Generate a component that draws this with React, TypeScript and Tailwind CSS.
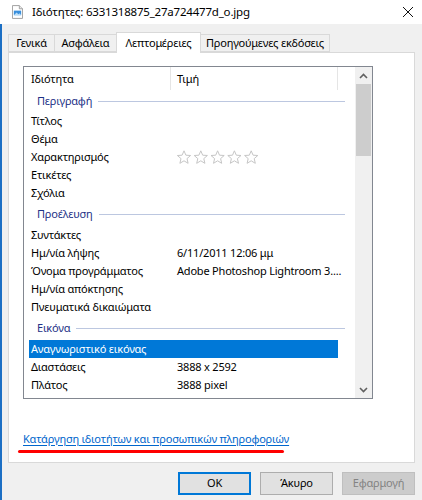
import React from 'react'

const font = { fontFamily: '"Noto Sans", "Liberation Sans", sans-serif' }

type Row =
  | { kind: 'group'; label: string; h: string }
  | { kind: 'item'; name: string; value?: string; stars?: boolean; selected?: boolean }

const rows: Row[] = [
  { kind: 'group', label: 'Περιγραφή', h: 'h-[21px]' },
  { kind: 'item', name: 'Τίτλος' },
  { kind: 'item', name: 'Θέμα' },
  { kind: 'item', name: 'Χαρακτηρισμός', stars: true },
  { kind: 'item', name: 'Ετικέτες' },
  { kind: 'item', name: 'Σχόλια' },
  { kind: 'group', label: 'Προέλευση', h: 'h-[24px]' },
  { kind: 'item', name: 'Συντάκτες' },
  { kind: 'item', name: 'Ημ/νία λήψης', value: '6/11/2011 12:06 μμ' },
  { kind: 'item', name: 'Όνομα προγράμματος', value: 'Adobe Photoshop Lightroom 3....' },
  { kind: 'item', name: 'Ημ/νία απόκτησης' },
  { kind: 'item', name: 'Πνευματικά δικαιώματα' },
  { kind: 'group', label: 'Εικόνα', h: 'h-[24px]' },
  { kind: 'item', name: 'Αναγνωριστικό εικόνας', selected: true },
  { kind: 'item', name: 'Διαστάσεις', value: '3888 x 2592' },
  { kind: 'item', name: 'Πλάτος', value: '3888 pixel' },
]

const Stars = () => (
  <svg width="84" height="15" viewBox="0 0 84 15">
    {[0, 1, 2, 3, 4].map((i) => (
      <polygon
        key={i}
        transform={`translate(${i * 16.8} 0)`}
        points="7,0.8 8.9,5.2 13.6,5.5 10,8.6 11.1,13.3 7,10.8 2.9,13.3 4,8.6 0.4,5.5 5.1,5.2"
        fill="none"
        stroke="#c6c6c6"
        strokeWidth="1"
        strokeLinejoin="round"
      />
    ))}
  </svg>
)

const FileIcon = () => (
  <svg width="11" height="14" viewBox="0 0 12 15">
    <path d="M0.5 0.5 H8 L11.5 4 V14.5 H0.5 Z" fill="#fff" stroke="#9a9a9a" />
    <path d="M8 0.5 V4 H11.5" fill="#e8e8e8" stroke="#9a9a9a" />
    <rect x="2" y="6" width="8" height="5" fill="#3a8fdc" />
    <path d="M2 11 L5 8 L7 10 L8.5 8.8 L10 11 Z" fill="#b9ddf7" />
  </svg>
)

const Tab = ({ label, w, active, first }: { label: string; w: string; active?: boolean; first?: boolean }) =>
  active ? (
    <div className={`relative z-10 -mb-px -ml-px flex h-[21px] ${w} items-start justify-center whitespace-nowrap border border-b-0 border-[#d9d9d9] bg-white pt-[2px]`}>
      {label}
    </div>
  ) : (
    <div
      className={`flex h-[18px] ${w} items-center justify-center whitespace-nowrap border border-[#d9d9d9] bg-[#f0f0f0] ${first ? '' : '-ml-px'}`}
    >
      {label}
    </div>
  )

export default function App() {
  return (
    <div className="flex h-[500px] w-[422px] flex-col overflow-hidden bg-[#f0f0f0] text-[11px] tracking-[-0.2px] text-black" style={font}>
      {/* title bar */}
      <div className="flex h-[24px] shrink-0 items-center bg-white">
        <div className="ml-[12px] mr-[9px] flex items-center">
          <FileIcon />
        </div>
        <span className="text-[11.5px] leading-none tracking-[-0.2px]">Ιδιότητες: 6331318875_27a724477d_o.jpg</span>
        <svg className="ml-auto mr-[8px]" width="12" height="12" viewBox="0 0 12 12">
          <path d="M1 1 L11 11 M11 1 L1 11" stroke="#111" strokeWidth="1" />
        </svg>
      </div>

      <div className="flex flex-1 flex-col border-l-2 border-[#1c6fc4]">
        {/* tabs */}
        <div className="mt-[8px] flex items-end pl-[6px]">
          <Tab label="Γενικά" w="w-[47px]" first />
          <Tab label="Ασφάλεια" w="w-[63px]" />
          <Tab label="Λεπτομέρειες" w="w-[85px]" active />
          <Tab label="Προηγούμενες εκδόσεις" w="w-[130px]" />
        </div>

        {/* panel */}
        <div className="ml-[6px] mr-[7px] flex h-[411px] flex-col border border-[#d9d9d9] bg-white">
          <div className="ml-[14px] mt-[13px] flex h-[333px] w-[350px] border border-[#828790]">
            <div className="flex flex-1 flex-col overflow-hidden">
              {/* column header */}
              <div className="flex h-[24px] shrink-0 items-center">
                <div className="w-[146px] pl-[7px]">Ιδιότητα</div>
                <div className="h-[23px] w-px self-start bg-[#e5e5e5]" />
                <div className="w-[166px] pl-[6px]">Τιμή</div>
                <div className="h-[23px] w-px self-start bg-[#e5e5e5]" />
              </div>

              {rows.map((r, i) =>
                r.kind === 'group' ? (
                  <div key={i} className={`flex ${r.h} shrink-0 items-center pl-[13px] pr-[10px]`}>
                    <span className="text-[#1e3287]">{r.label}</span>
                    <div className="ml-[6px] h-px flex-1 bg-[#bcc7e0]" />
                  </div>
                ) : r.selected ? (
                  <div key={i} className="ml-[5px] flex h-[18px] w-[309px] shrink-0 items-center bg-[#0078d7] pl-[2px] text-white">
                    {r.name}
                  </div>
                ) : (
                  <div key={i} className="flex h-[18px] shrink-0 items-center">
                    <div className="w-[153px] shrink-0 pl-[7px] whitespace-nowrap">{r.name}</div>
                    {r.stars ? (
                      <Stars />
                    ) : (
                      <div className="whitespace-nowrap">{r.value}</div>
                    )}
                  </div>
                )
              )}
            </div>

            {/* scrollbar */}
            <div className="flex w-[17px] shrink-0 flex-col bg-[#f0f0f0]">
              <div className="flex h-[17px] items-center justify-center">
                <svg width="9" height="6" viewBox="0 0 9 6">
                  <path d="M1 5 L4.5 1.5 L8 5" fill="none" stroke="#606060" strokeWidth="1.6" />
                </svg>
              </div>
              <div className="mx-px h-[72px] bg-[#cdcdcd]" />
              <div className="flex-1" />
              <div className="flex h-[17px] items-center justify-center">
                <svg width="9" height="6" viewBox="0 0 9 6">
                  <path d="M1 1 L4.5 4.5 L8 1" fill="none" stroke="#606060" strokeWidth="1.6" />
                </svg>
              </div>
            </div>
          </div>

          <div className="mt-auto mb-[9px] ml-[9px] flex flex-col items-start">
            <span className="ml-[5px] text-[#0066cc] underline decoration-[#0066cc] underline-offset-2">
              Κατάργηση ιδιοτήτων και προσωπικών πληροφοριών
            </span>
            <div className="mt-[3px] h-[3px] w-[266px] rounded-full bg-[#ff0000]" />
          </div>
        </div>

        {/* buttons */}
        <div className="mt-[9px] flex justify-end gap-[9px] pr-[7px]">
          <button className="flex h-[23px] w-[73px] items-center justify-center border-2 border-[#0078d7] bg-[#e1e1e1]">OK</button>
          <button className="flex h-[23px] w-[73px] items-center justify-center border border-[#adadad] bg-[#e1e1e1]">Άκυρο</button>
          <button className="flex h-[23px] w-[73px] items-center justify-center border border-[#bfbfbf] bg-[#cccccc] text-[#838383]">Εφαρμογή</button>
        </div>
      </div>
    </div>
  )
}
